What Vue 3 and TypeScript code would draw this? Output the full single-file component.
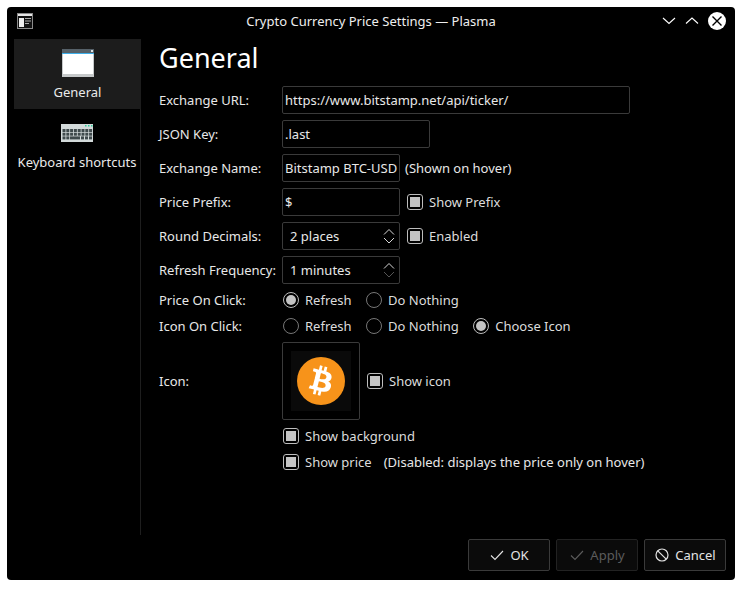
<script setup lang="ts">
const radios1 = [
  { label: 'Refresh', on: true },
  { label: 'Do Nothing', on: false },
]
const radios2 = [
  { label: 'Refresh', on: false },
  { label: 'Do Nothing', on: false },
  { label: 'Choose Icon', on: true },
]
const keyW = 3
const row1 = Array.from({ length: 8 }, (_, i) => ({ x: 1.5 + i * 3.800, w: keyW }))
const row2 = Array.from({ length: 8 }, (_, i) => ({ x: 1.5 + i * 3.800, w: keyW }))
const row3 = [
  { x: 1.5, w: 3 },
  { x: 5.3, w: 3 },
  { x: 9, w: 10 },
  { x: 20, w: 3 },
  { x: 24, w: 3 },
  { x: 28, w: 3 },
]
const keyRows = [
  { y: 5, keys: row1 },
  { y: 8.700, keys: row2 },
  { y: 12.400, keys: row3 },
]
</script>

<template>
  <div class="window">
    <header class="titlebar">
      <svg class="menu-icon" width="16" height="16" viewBox="0 0 16 16">
        <rect x="0.5" y="0.5" width="15" height="15" fill="#111" stroke="#8a8a8a" />
        <rect x="1" y="1" width="14" height="2" fill="#e6e6e6" />
        <rect x="2" y="5" width="5" height="9" fill="#eee" />
        <path d="M8 5.500h6M8 8h6M8 10.500h4" stroke="#aaa" />
      </svg>
      <span class="title">Crypto Currency Price Settings — Plasma</span>
      <div class="controls">
        <svg width="14" height="14" viewBox="0 0 14 14"><path d="M1 4 7 9.500 13 4" fill="none" stroke="#fff" stroke-width="1.100" /></svg>
        <svg width="14" height="14" viewBox="0 0 14 14"><path d="M1 9.500 7 4l6 5.500" fill="none" stroke="#fff" stroke-width="1.100" /></svg>
        <svg width="18" height="18" viewBox="0 0 18 18"><circle cx="9" cy="9" r="9" fill="#fff" /><path d="M4.500 4.500l9 9M13.500 4.500l-9 9" stroke="#000" stroke-width="1.400" /></svg>
      </div>
    </header>

    <div class="main">
      <nav class="sidebar">
        <div class="nav-item active">
          <svg width="32" height="28" viewBox="0 0 32 28">
            <rect width="32" height="28" fill="#c6c9ca" />
            <rect x="1" y="5" width="30" height="20" fill="#fff" />
            <rect width="32" height="4" fill="#566169" />
            <rect y="4" width="32" height="1" fill="#3daee9" />
            <rect x="29" y="1" width="2" height="2" fill="#dfe3e5" />
          </svg>
          <span>General</span>
        </div>
        <div class="nav-item">
          <svg width="32" height="18" viewBox="0 0 32 18">
            <rect width="32" height="18" fill="#d3dada" />
            <rect x="24" y="1" width="1.500" height="1.500" fill="#2ecc9a" />
            <rect x="27" y="1" width="1.500" height="1.500" fill="#2ecc9a" />
            <rect x="30" y="1" width="1.500" height="1.500" fill="#2ecc9a" />
            <g v-for="row in keyRows" :key="row.y">
              <rect v-for="k in row.keys" :key="k.x" :x="k.x" :y="row.y" :width="k.w" height="3" fill="#3f4a4c" />
            </g>
          </svg>
          <span>Keyboard shortcuts</span>
        </div>
      </nav>

      <section class="content">
        <h1>General</h1>
        <div class="form">
          <label>Exchange URL:</label>
          <div class="field"><div class="input url">https://www.bitstamp.net/api/ticker/</div></div>

          <label>JSON Key:</label>
          <div class="field"><div class="input key">.last</div></div>

          <label>Exchange Name:</label>
          <div class="field">
            <div class="input name">Bitstamp BTC-USD</div>
            <span class="note">(Shown on hover)</span>
          </div>

          <label>Price Prefix:</label>
          <div class="field">
            <div class="input name">$</div>
            <span class="check"><i class="box"></i>Show Prefix</span>
          </div>

          <label>Round Decimals:</label>
          <div class="field">
            <div class="input name spin">
              <span>2 places</span>
              <svg width="16" height="20" viewBox="0 0 16 20">
                <path d="M3 8.500l5-5 5 5M3 12l5 5 5-5" fill="none" stroke="#d8d8d8" />
              </svg>
            </div>
            <span class="check"><i class="box"></i>Enabled</span>
          </div>

          <label>Refresh Frequency:</label>
          <div class="field">
            <div class="input name spin">
              <span>1 minutes</span>
              <svg width="16" height="20" viewBox="0 0 16 20">
                <path d="M3 8.500l5-5 5 5" fill="none" stroke="#d8d8d8" />
                <path d="M3 12l5 5 5-5" fill="none" stroke="#555" />
              </svg>
            </div>
          </div>

          <label class="short">Price On Click:</label>
          <div class="field short radios">
            <span v-for="r in radios1" :key="r.label" class="radio"><i class="dot" :class="{ on: r.on }"></i>{{ r.label }}</span>
          </div>

          <label class="short">Icon On Click:</label>
          <div class="field short radios">
            <span v-for="r in radios2" :key="r.label" class="radio"><i class="dot" :class="{ on: r.on }"></i>{{ r.label }}</span>
          </div>

          <label>Icon:</label>
          <div class="field">
            <div class="icon-btn">
              <div class="icon-bg">
                <svg width="48" height="48" viewBox="0 0 64 64">
                  <circle cx="32" cy="32" r="32" fill="#f7931a" />
                  <path fill="#fff" d="M46.103 27.444c.637-4.258-2.605-6.547-7.038-8.074l1.438-5.768-3.511-.875-1.4 5.616c-.923-.23-1.871-.447-2.813-.662l1.41-5.653-3.51-.875-1.438 5.766c-.764-.174-1.514-.346-2.242-.527l.004-.018-4.842-1.209-.934 3.75s2.605.597 2.55.634c1.422.355 1.679 1.296 1.636 2.042l-1.638 6.571c.098.025.225.061.365.117l-.371-.092-2.296 9.205c-.174.432-.615 1.08-1.609.834.035.051-2.552-.637-2.552-.637l-1.743 4.02 4.57 1.139c.85.213 1.683.436 2.502.646l-1.453 5.835 3.508.875 1.44-5.772c.957.26 1.887.5 2.797.726l-1.434 5.745 3.511.875 1.453-5.823c5.987 1.133 10.489.676 12.384-4.739 1.527-4.36-.076-6.875-3.226-8.515 2.294-.529 4.022-2.038 4.483-5.155zM38.081 38.693c-1.085 4.36-8.426 2.003-10.806 1.412l1.928-7.729c2.38.594 10.012 1.77 8.878 6.317zm1.086-11.312c-.99 3.966-7.1 1.951-9.082 1.457l1.748-7.01c1.982.494 8.365 1.416 7.334 5.553z" />
                </svg>
              </div>
            </div>
            <span class="check"><i class="box"></i>Show icon</span>
          </div>

          <div class="field wide bg-row">
            <span class="check tight"><i class="box"></i>Show background</span>
          </div>
          <div class="field wide price-row">
            <span class="check tight"><i class="box"></i>Show price</span>
            <span class="note price-note">(Disabled: displays the price only on hover)</span>
          </div>
        </div>
      </section>
    </div>

    <footer class="buttons">
      <div class="btn">
        <svg width="16" height="16" viewBox="0 0 16 16"><path d="M2 8.500 6 12.500 14 4" fill="none" stroke="#e4e4e4" stroke-width="1.100" /></svg>
        <span>OK</span>
      </div>
      <div class="btn disabled">
        <svg width="16" height="16" viewBox="0 0 16 16"><path d="M2 8.500 6 12.500 14 4" fill="none" stroke="#5c5c5c" stroke-width="1.100" /></svg>
        <span>Apply</span>
      </div>
      <div class="btn">
        <svg width="16" height="16" viewBox="0 0 16 16"><circle cx="8" cy="8" r="6" fill="none" stroke="#e4e4e4" stroke-width="1.200" /><path d="M3.800 3.800l8.400 8.400" stroke="#e4e4e4" stroke-width="1.200" /></svg>
        <span>Cancel</span>
      </div>
    </footer>
  </div>
</template>

<style>
html, body { margin: 0; background: #fff; }
</style>

<style scoped>
.window {
  box-sizing: border-box;
  width: 728px;
  height: 573px;
  margin: 7px 0 0 7px;
  background: #000;
  border-radius: 4px;
  color: #e8e8e8;
  font-family: "Noto Sans", sans-serif;
  font-size: 13px;
  display: flex;
  flex-direction: column;
}
.titlebar {
  height: 32px;
  flex: none;
  position: relative;
  display: flex;
  align-items: center;
  justify-content: space-between;
  padding: 0 9px 4px 10px;
  box-sizing: border-box;
}
.title {
  position: absolute;
  left: 0;
  right: 0;
  top: 5px;
  text-align: center;
  color: #eee;
  pointer-events: none;
}
.controls { display: flex; align-items: center; gap: 9px; }
.controls svg { display: block; }
.main { flex: 1; display: flex; min-height: 0; padding-left: 7px; }
.sidebar {
  width: 127px;
  flex: none;
  box-sizing: border-box;
  border-right: 1px solid #1e1e1e;
}
.nav-item {
  display: flex;
  flex-direction: column;
  align-items: center;
  text-align: center;
  white-space: nowrap;
  color: #eaeaea;
  box-sizing: border-box;
}
.nav-item svg { display: block; }
.nav-item.active { height: 70px; padding-top: 10px; background: #1c1c1c; margin-right: -1px; }
.nav-item.active svg { margin-bottom: 6px; }
.nav-item:not(.active) { height: 66px; padding-top: 15px; }
.nav-item:not(.active) svg { margin-bottom: 11px; }
.content { flex: 1; padding-left: 18px; min-width: 0; }
h1 {
  margin: 0;
  height: 47px;
  font-size: 27px;
  font-weight: 400;
  line-height: 38px;
  color: #fff;
}
.form {
  display: grid;
  grid-template-columns: 117px 1fr;
  column-gap: 6px;
  row-gap: 6px;
  align-items: center;
}
label { white-space: nowrap; }
label.short, .field.short { margin-top: -3px; margin-bottom: -3px; height: 26px; display: flex; align-items: center; }
.field { display: flex; align-items: center; gap: 5px; }
.input {
  box-sizing: border-box;
  height: 28px;
  border: 1px solid #3a3a3a;
  border-radius: 2px;
  display: flex;
  align-items: center;
  padding-left: 2px;
  white-space: nowrap;
  overflow: hidden;
  color: #e8e8e8;
}
.url { width: 348px; }
.key { width: 148px; }
.name { width: 118px; }
.spin { justify-content: space-between; padding: 0 2px 0 7px; }
.spin svg { display: block; flex: none; }
.note { white-space: nowrap; }
.check { display: inline-flex; align-items: center; gap: 6px; margin-left: 2px; color: #dcdcdc; white-space: nowrap; }
.check.tight { margin-left: 1px; }
.box {
  width: 16px;
  height: 16px;
  box-sizing: border-box;
  border: 1px solid #bdbdbd;
  border-radius: 3px;
  background: #000;
  display: block;
  padding: 2px;
}
.box::after { content: ""; display: block; width: 10px; height: 10px; background: #c4c4c4; }
.radios { gap: 14.5px; }
.radio { display: inline-flex; align-items: center; gap: 6px; margin-left: 1px; color: #dcdcdc; white-space: nowrap; }
.radio + .radio { margin-left: 0; }
.dot {
  width: 16px;
  height: 16px;
  box-sizing: border-box;
  border: 1px solid #777;
  border-radius: 50%;
  display: flex;
  align-items: center;
  justify-content: center;
}
.dot.on { border-color: #bdbdbd; }
.dot.on::after { content: ""; width: 10px; height: 10px; border-radius: 50%; background: #c4c4c4; }
.icon-btn {
  box-sizing: border-box;
  width: 78px;
  height: 78px;
  border: 1px solid #3a3a3a;
  border-radius: 2px;
  display: flex;
  align-items: center;
  justify-content: center;
}
.icon-bg {
  width: 60px;
  height: 60px;
  background: #0a0a0a;
  display: flex;
  align-items: center;
  justify-content: center;
}
.icon-bg svg { display: block; }
.wide { grid-column: 2; }
.bg-row { height: 20px; }
.price-row { height: 20px; }
.price-note { margin-left: 7px; }
.buttons {
  flex: none;
  height: 45px;
  display: flex;
  justify-content: flex-end;
  gap: 6px;
  padding: 4px 9px 0 0;
  box-sizing: border-box;
}
.btn {
  box-sizing: border-box;
  width: 82px;
  height: 32px;
  border: 1px solid #3a3a3a;
  border-radius: 2px;
  background: #0b0b0b;
  display: flex;
  align-items: center;
  justify-content: center;
  gap: 5px;
  color: #e4e4e4;
}
.btn svg { display: block; }
.btn.disabled { color: #5c5c5c; border-color: #222; }
</style>
